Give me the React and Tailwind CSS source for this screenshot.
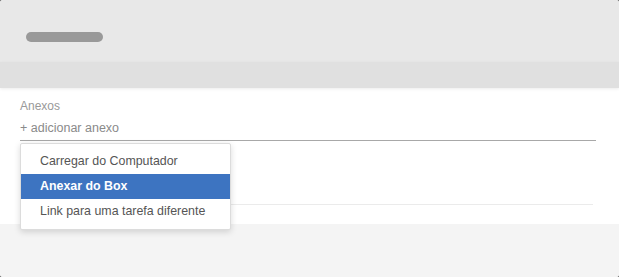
import React from 'react';

const font = { fontFamily: '"Liberation Sans", Arial, sans-serif' };

const MenuItem = ({ label, active }) => (
  <div
    className={
      active
        ? 'h-[25px] flex items-center pl-[19px] bg-[#3d74c1] text-white font-bold'
        : 'h-[25px] flex items-center pl-[19px] text-[#555]'
    }
  >
    {label}
  </div>
);

export default function App() {
  return (
    <div className="w-[619px] h-[277px] bg-[#6b6b6b]" style={font}>
      <div className="w-full h-full flex flex-col rounded-[3px] overflow-hidden bg-white">
        <div className="h-[62px] bg-[#e8e8e8] pl-[26px] pt-[32px]">
          <div className="w-[77px] h-[10px] rounded-full bg-[#999]" />
        </div>
        <div className="h-[26px] bg-[#e0e0e0] shadow-[0_1px_3px_rgba(0,0,0,0.08)] relative z-10" />

        <div className="relative h-[136px] bg-white px-[20px] pt-[11px]">
          <div className="text-[12px] leading-[14px] text-[#999]">Anexos</div>
          <div className="mt-[8px] pb-[4px] mr-[3px] border-b border-[#a8a8a8] text-[12.5px] leading-[15px] text-[#8a8a8a]">
            + adicionar anexo
          </div>
          <div className="mt-[63px] mr-[6px] border-b border-[#ebebeb]" />

          <div className="absolute left-[20px] top-[55px] w-[211px] py-[5px] bg-white border border-[#dcdcdc] rounded-[2px] shadow-[0_2px_6px_rgba(0,0,0,0.15)] text-[12.4px] z-20">
            <MenuItem label="Carregar do Computador" />
            <MenuItem label="Anexar do Box" active />
            <MenuItem label="Link para uma tarefa diferente" />
          </div>
        </div>

        <div className="flex-1 bg-[#f4f4f4]" />
      </div>
    </div>
  );
}
